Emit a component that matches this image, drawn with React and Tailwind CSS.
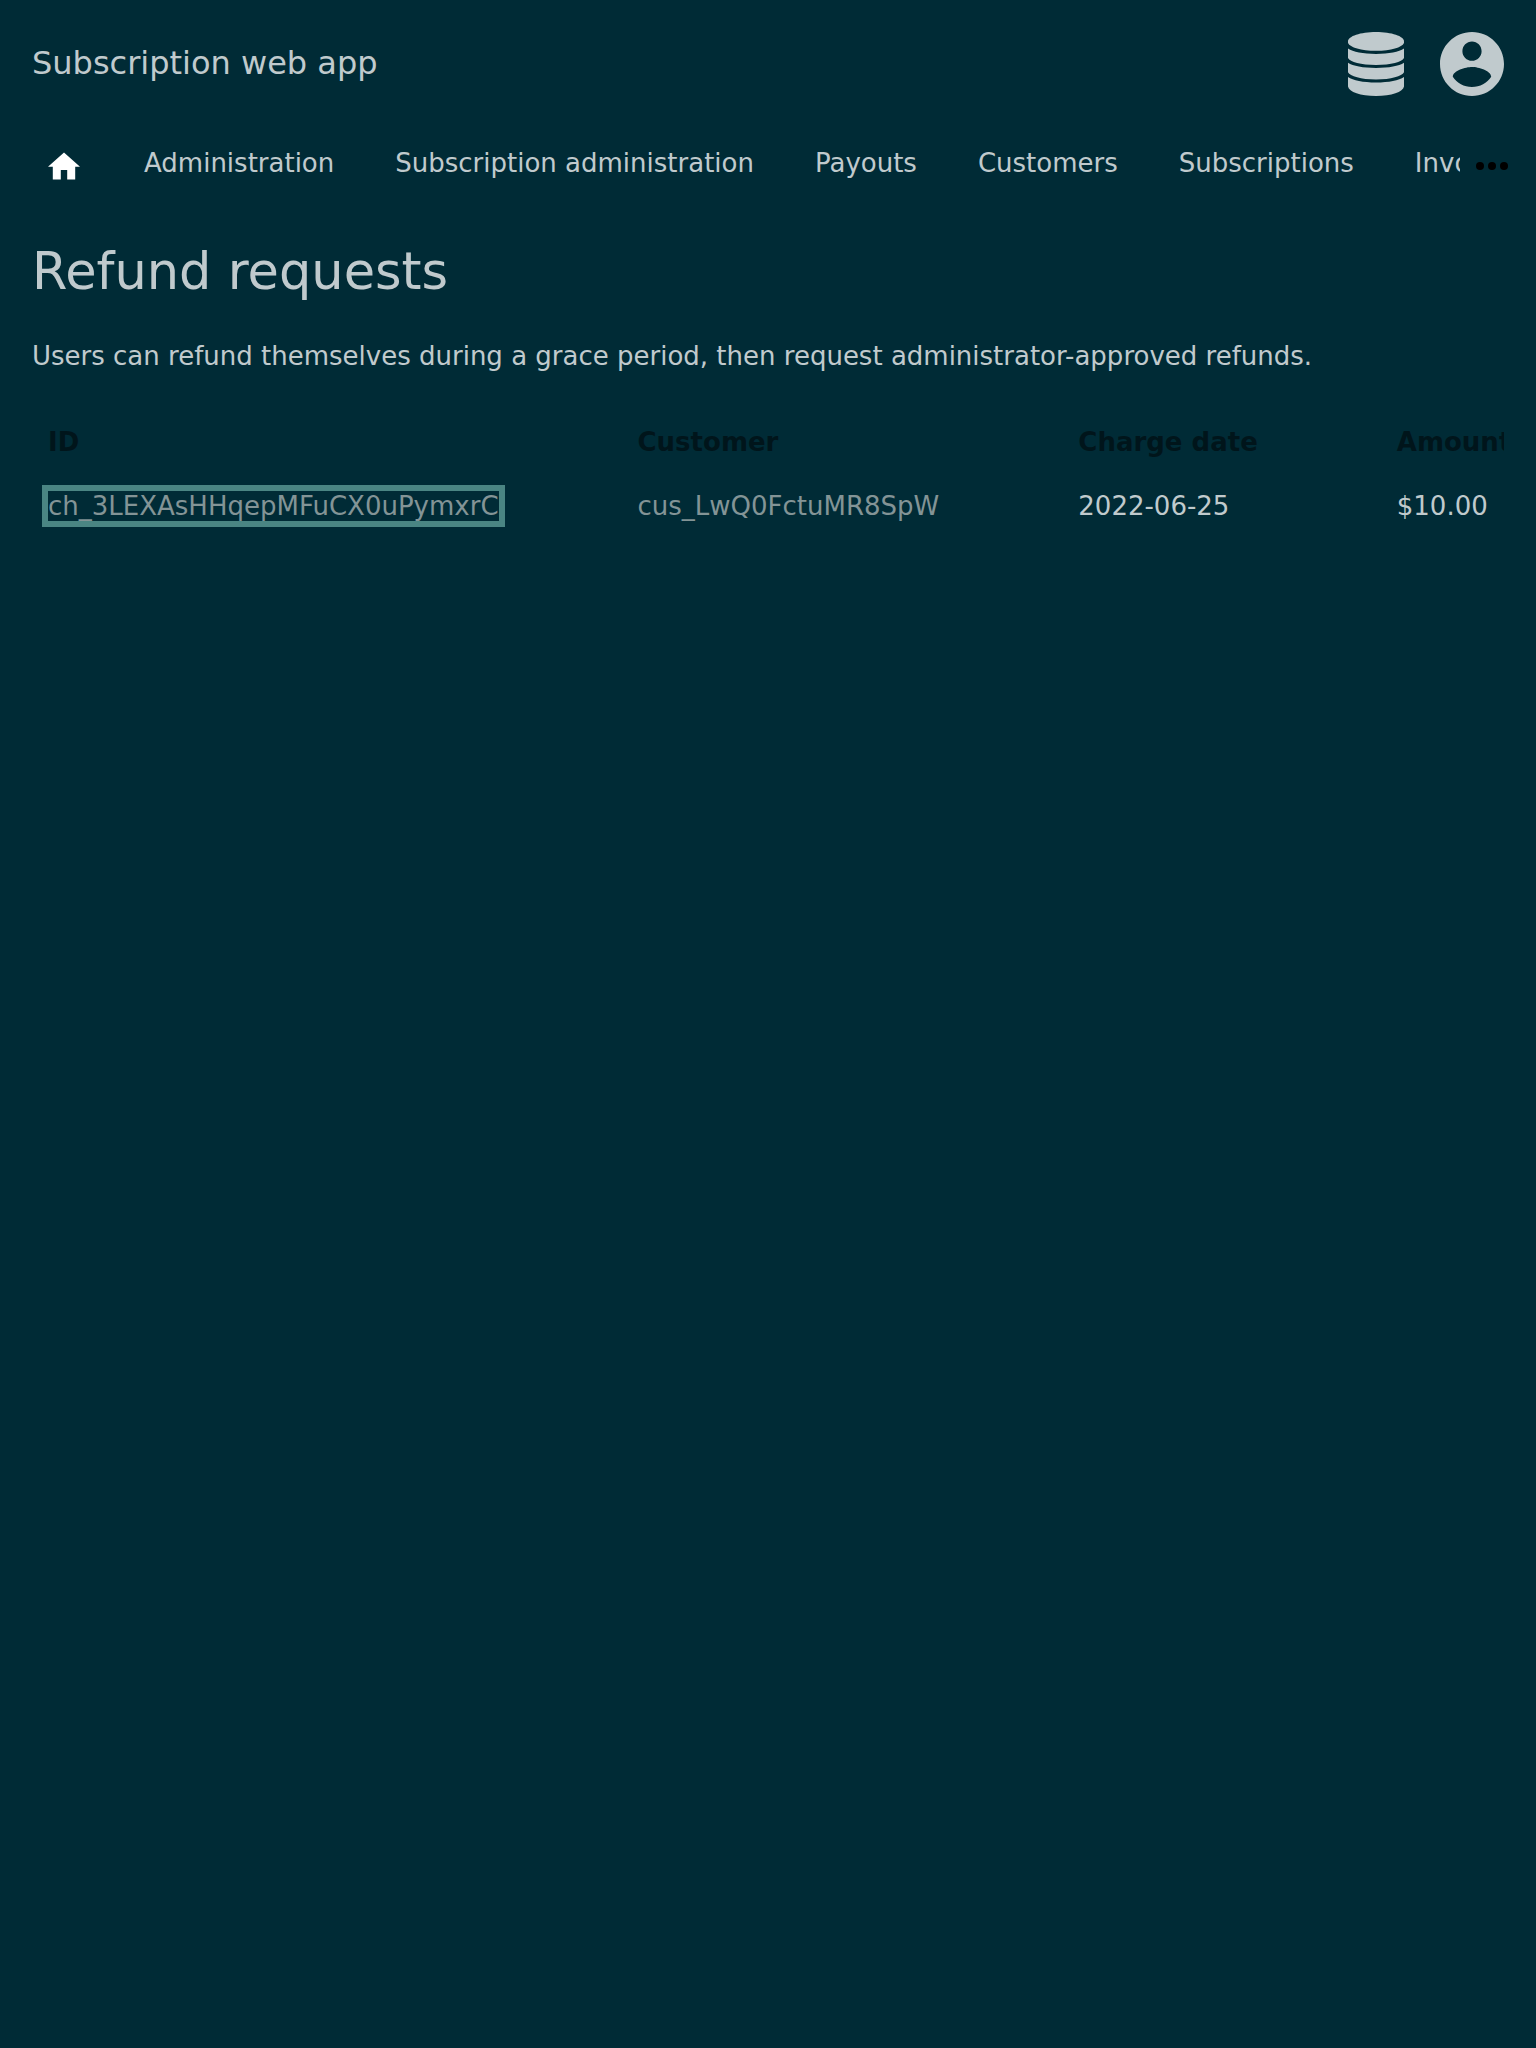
const NAV_ITEMS = ['Administration', 'Subscription administration', 'Payouts', 'Customers', 'Subscriptions', 'Invoices'];

function DatabaseIcon() {
  return (
    <svg viewBox="0 0 56 64" className="h-16 w-14" fill="currentColor" aria-hidden="true">
      <path d="M28 0C43.500 0 56 4.200 56 9.300V11C54 15.500 43 18.800 28 18.800S2 15.500 0 11V9.300C0 4.200 12.500 0 28 0Z" />
      <path d="M0 16.600C5 20 15 22 28 22S51 20 56 16.600V26C54 30 43 33 28 33S2 30 0 26Z" />
      <path d="M0 30.800C5 34 15 36 28 36S51 34 56 30.800V40.200C54 44.200 43 47.400 28 47.400S2 44.200 0 40.200Z" />
      <path d="M0 45C5 48.300 15 50.500 28 50.500S51 48.300 56 45V54.500C55 60 43.500 64 28 64S1 60 0 54.500Z" />
    </svg>
  );
}

function AccountIcon() {
  return (
    <svg viewBox="2 2 20 20" className="size-16" fill="currentColor" aria-hidden="true">
      <path d="M12 2C6.480 2 2 6.480 2 12s4.480 10 10 10 10-4.480 10-10S17.520 2 12 2zm0 3c1.660 0 3 1.340 3 3s-1.340 3-3 3-3-1.340-3-3 1.340-3 3-3zm0 14.200c-2.500 0-4.710-1.280-6-3.220.030-1.990 4-3.080 6-3.080 1.990 0 5.970 1.090 6 3.080-1.290 1.940-3.500 3.220-6 3.220z" />
    </svg>
  );
}

export default function App() {
  return (
    <div className="min-h-screen overflow-hidden bg-[#002b36] font-['DejaVu_Sans',sans-serif] text-[26px] leading-8 text-[#c0cacd]">
      <header className="flex items-center justify-between px-8 pt-8">
        <a href="#" className="pb-0.5 text-[32px] leading-10">Subscription web app</a>
        <div className="flex items-center gap-9">
          <button type="button" aria-label="Administrator menu"><DatabaseIcon /></button>
          <button type="button" aria-label="Account menu"><AccountIcon /></button>
        </div>
      </header>
      <nav className="mt-9 flex h-16 items-center pl-12 pr-7">
        <div className="flex min-w-0 flex-1 items-center gap-16 overflow-hidden whitespace-nowrap">
          <a href="#" aria-label="Home" className="mt-1 shrink-0 text-white">
            <svg viewBox="2 3 20 17" className="h-7 w-8" fill="currentColor" aria-hidden="true">
              <path d="M10 20v-6h4v6h5v-8h3L12 3 2 12h3v8z" />
            </svg>
          </a>
          <div className="flex shrink-0 gap-[61px] pb-0.5">
            {NAV_ITEMS.map((item) => (
              <a key={item} href="#">{item}</a>
            ))}
          </div>
        </div>
        <button type="button" aria-label="More" className="ml-4 mt-1 text-black">
          <svg viewBox="4 10 16 4" className="h-2 w-8" fill="currentColor" aria-hidden="true">
            <circle cx="6" cy="12" r="2" />
            <circle cx="12" cy="12" r="2" />
            <circle cx="18" cy="12" r="2" />
          </svg>
        </button>
      </nav>
      <main className="px-8 pt-11">
        <h1 className="text-[51px] leading-[64px]">Refund requests</h1>
        <p className="mt-9 leading-8">Users can refund themselves during a grace period, then request administrator-approved refunds.</p>
        <div className="mt-[38px] overflow-hidden">
          <table className="whitespace-nowrap text-left">
            <thead className="text-[#00151b]">
              <tr className="h-16">
                <th className="pl-4 pr-[123px]">ID</th>
                <th className="pl-4 pr-[123px]">Customer</th>
                <th className="pl-4 pr-[123px]">Charge date</th>
                <th className="pl-4">Amount</th>
              </tr>
            </thead>
            <tbody>
              <tr className="h-16">
                <td className="pl-4 pr-[123px]"><a href="#" className="text-[#839496] outline-6 outline-[#4a8583]">ch_3LEXAsHHqepMFuCX0uPymxrC</a></td>
                <td className="pl-4 pr-[123px]"><a href="#" className="text-[#839496]">cus_LwQ0FctuMR8SpW</a></td>
                <td className="pl-4 pr-[123px]">2022-06-25</td>
                <td className="pl-4">$10.00</td>
              </tr>
            </tbody>
          </table>
        </div>
      </main>
    </div>
  );
}
